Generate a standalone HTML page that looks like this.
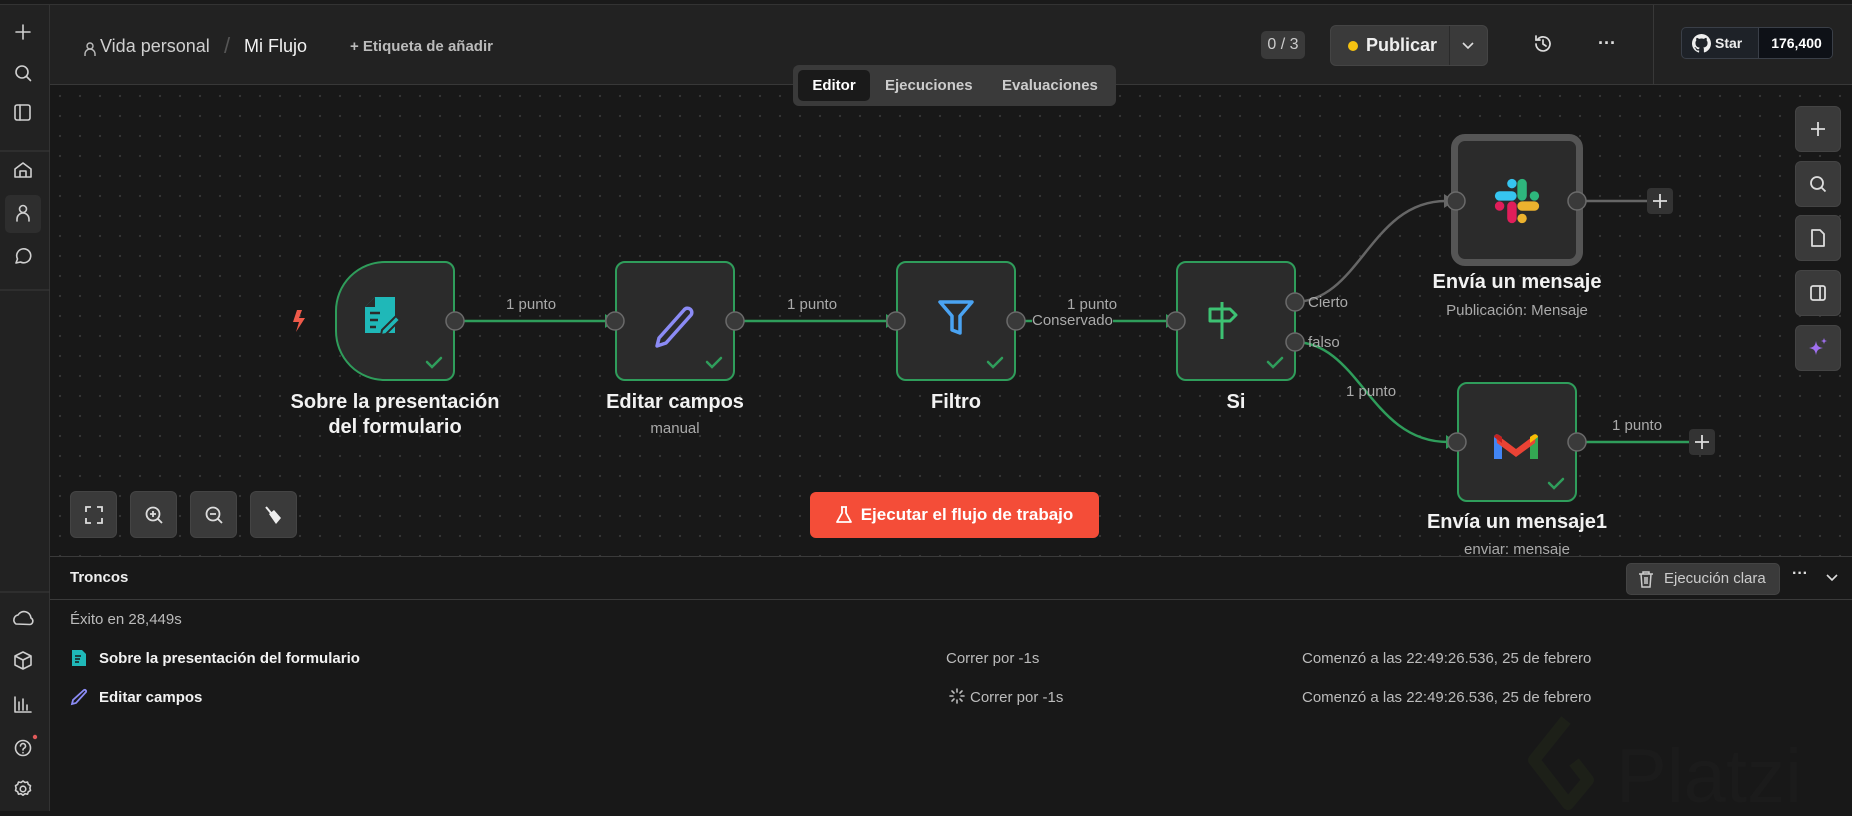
<!DOCTYPE html>
<html><head><meta charset="utf-8"><style>
*{box-sizing:border-box;margin:0;padding:0}
body{width:1852px;height:811px;overflow:hidden;background:#181818;font-family:"Liberation Sans",sans-serif;color:#ddd;position:relative}
.abs{position:absolute}
#top{left:0;top:0;width:1852px;height:5px;background:#1a1a1a;border-bottom:1px solid #333}
#side{left:0;top:5px;width:50px;height:806px;background:#222;border-right:1px solid #333}
#head{left:50px;top:5px;width:1802px;height:80px;background:#222;border-bottom:1px solid #383838}
#canvas{left:50px;top:86px;width:1802px;height:470px;background-color:#181818;background-image:radial-gradient(circle,#363636 1px,transparent 1.3px);background-size:20px 20px}
#panel{left:50px;top:556px;width:1802px;height:255px;background:#181818;border-top:1px solid #3a3a3a}
.btn{position:absolute;background:#3a3a3a;border:1px solid #444;border-radius:6px;display:flex;align-items:center;justify-content:center}
.node{position:absolute;background:#2b2b2b;border:2px solid #2f9d5b;border-radius:10px}
.lbl{position:absolute;text-align:center;color:#f2f2f2;font-weight:bold;font-size:20px;line-height:25px;transform:translateX(-50%);white-space:nowrap}
.sub{position:absolute;text-align:center;color:#aaa;font-size:15px;transform:translateX(-50%);white-space:nowrap}
.el{position:absolute;color:#aaa;font-size:15px;white-space:nowrap}
</style></head><body>
<div id="top" class="abs"></div>
<div id="side" class="abs">
<svg width="50" height="806" viewBox="0 5 50 806" fill="none" stroke="#cfcfcf" stroke-width="1.6" stroke-linecap="round" stroke-linejoin="round">
<path d="M23 25v14M16 32h14"/>
<circle cx="22" cy="72" r="6"/><path d="M26.5 76.5l4 4"/>
<rect x="15" y="105" width="15" height="15" rx="2"/><path d="M20 105v15"/>
<line x1="0" y1="151" x2="50" y2="151" stroke="#3a3a3a" stroke-width="1"/>
<path d="M15 177v-8l8-6 8 6v8zM20 177v-6h6v6"/>
<rect x="5" y="195" width="36" height="38" rx="5" fill="#2e2e2e" stroke="none"/>
<circle cx="23" cy="209" r="3.5"/><path d="M17 221v-2a6 6 0 0 1 12 0v2"/>
<path d="M16 263l1.5-4a7 7 0 1 1 3 3z"/>
<line x1="0" y1="290" x2="50" y2="290" stroke="#3a3a3a" stroke-width="1"/>
<line x1="0" y1="592" x2="50" y2="592" stroke="#3a3a3a" stroke-width="1"/>
<path d="M16 624a5 5 0 0 1 2-9 7 7 0 0 1 13 3 3.5 3.5 0 0 1-1 6.5z"/>
<path d="M23 652l8 4v9l-8 4-8-4v-9zM15 656l8 4 8-4M23 660v9"/>
<path d="M15 697v15h16M19 710v-8M23 710v-11M27 710v-5"/>
<circle cx="23" cy="748" r="7.5"/><path d="M20.5 746a2.5 2.5 0 1 1 3.5 2.3c-.8.4-1 1-1 1.7M23 752.5v.3"/>
<circle cx="35" cy="737" r="2.2" fill="#e05a5a" stroke="none"/>
<circle cx="23" cy="789" r="2.8"/><path d="M23 781l2 1.5 2.5-.5.8 2.4 2.2 1.3-.6 2.4.6 2.4-2.2 1.3-.8 2.4-2.5-.5-2 1.5-2-1.5-2.5.5-.8-2.4-2.2-1.3.6-2.4-.6-2.4 2.2-1.3.8-2.4 2.5.5z"/>
</svg></div>
<div id="head" class="abs">
<svg class="abs" style="left:33px;top:36px" width="14" height="16" fill="none" stroke="#bbb" stroke-width="1.4"><circle cx="7" cy="5" r="3"/><path d="M2 15v-2a5 5 0 0 1 10 0v2"/></svg>
<div class="abs" style="left:50px;top:31px;font-size:18px;color:#cfcfcf">Vida personal</div>
<div class="abs" style="left:174px;top:28px;font-size:22px;color:#555">/</div>
<div class="abs" style="left:194px;top:31px;font-size:18px;color:#f2f2f2">Mi Flujo</div>
<div class="abs" style="left:300px;top:33px;font-size:15px;color:#bbb;font-weight:bold">+ Etiqueta de añadir</div>
<div class="abs" style="left:1211px;top:26px;width:44px;height:28px;background:#3a3a3a;border-radius:5px;color:#ccc;font-size:16px;text-align:center;line-height:28px">0 / 3</div>
<div class="abs" style="left:1280px;top:20px;width:158px;height:41px;background:#3a3a3a;border:1px solid #444;border-radius:6px">
<div class="abs" style="left:17px;top:15px;width:10px;height:10px;border-radius:50%;background:#f5c211"></div>
<div class="abs" style="left:35px;top:9px;font-size:18px;font-weight:bold;color:#eee">Publicar</div>
<div class="abs" style="left:118px;top:0;width:1px;height:39px;background:#2a2a2a"></div>
<svg class="abs" style="left:131px;top:15px" width="12" height="10" fill="none" stroke="#ddd" stroke-width="1.6"><path d="M1 2l5 5 5-5"/></svg></div>
<svg class="abs" style="left:1483px;top:29px" width="20" height="20" fill="none" stroke="#ddd" stroke-width="1.7" stroke-linecap="round"><path d="M3 10a7 7 0 1 0 2-5M3 2v4h4M10 6v4l3 2"/></svg>
<div class="abs" style="left:1548px;top:28px;font-size:18px;color:#ddd;font-weight:bold">···</div>
<div class="abs" style="left:1603px;top:0;width:1px;height:80px;background:#383838"></div>
<div class="abs" style="left:1631px;top:22px;width:152px;height:32px;border:1px solid #3a3f48;border-radius:5px;background:#1e2228;overflow:hidden">
<svg class="abs" style="left:10px;top:6px" width="19" height="19" viewBox="0 0 16 16" fill="#eee"><path d="M8 0C3.6 0 0 3.6 0 8c0 3.5 2.3 6.5 5.5 7.6.4.1.5-.2.5-.4v-1.4c-2.2.5-2.7-1-2.7-1-.4-.9-.9-1.2-.9-1.2-.7-.5.1-.5.1-.5.8.1 1.2.8 1.2.8.7 1.3 1.9.9 2.3.7.1-.5.3-.9.5-1.1-1.8-.2-3.6-.9-3.6-4 0-.9.3-1.6.8-2.1-.1-.2-.4-1 .1-2.1 0 0 .7-.2 2.2.8.6-.2 1.3-.3 2-.3s1.4.1 2 .3c1.5-1 2.2-.8 2.2-.8.4 1.1.2 1.9.1 2.1.5.6.8 1.3.8 2.1 0 3.1-1.9 3.7-3.6 3.9.3.3.5.8.5 1.5v2.2c0 .2.1.5.6.4C13.7 14.5 16 11.5 16 8c0-4.4-3.6-8-8-8z"/></svg>
<div class="abs" style="left:33px;top:7px;font-size:14px;font-weight:bold;color:#eee">Star</div>
<div class="abs" style="left:76px;top:0;width:76px;height:32px;background:#0e1117;border-left:1px solid #3a3f48;color:#fff;font-weight:bold;font-size:14px;text-align:center;line-height:30px">176,400</div></div>
</div>
<div id="canvas" class="abs"></div>
<div class="abs" style="left:793px;top:65px;width:323px;height:41px;background:#3a3a3a;border-radius:6px">
<div class="abs" style="left:5px;top:5px;width:72px;height:31px;background:#1a1a1a;border-radius:5px;color:#fff;font-weight:bold;font-size:15px;text-align:center;line-height:31px">Editor</div>
<div class="abs" style="left:92px;top:12px;font-size:15px;font-weight:bold;color:#ccc">Ejecuciones</div>
<div class="abs" style="left:209px;top:12px;font-size:15px;font-weight:bold;color:#ccc">Evaluaciones</div></div>
<svg class="abs" style="left:0;top:0" width="1852" height="811" fill="none">
<g stroke="#2f9d5b" stroke-width="2.5">
<path d="M455 321H606"/><path d="M735 321H887"/><path d="M1015 321H1167"/>
<path d="M1294 342C1360 342 1370 442 1448 442"/>
<path d="M1576 442H1689"/></g>
<g fill="#2f9d5b"><path d="M605 314l11 7-11 7z"/><path d="M886 314l11 7-11 7z"/><path d="M1166 314l11 7-11 7z"/><path d="M1446 435l11 7-11 7z"/></g>
<path d="M1294 302C1360 302 1370 201 1446 201" stroke="#666" stroke-width="2.5"/><path d="M1444 194l11 7-11 7z" fill="#666"/>
<path d="M1577 201H1648" stroke="#666" stroke-width="2.5"/>
<path d="M297 310l-4 12h6l-3 10 9-14h-6l3-8z" fill="#ef5a4a"/>
</svg>
<div class="node" style="left:335px;top:261px;width:120px;height:120px;border-radius:50px 10px 10px 50px"></div>
<div class="node" style="left:615px;top:261px;width:120px;height:120px"></div>
<div class="node" style="left:896px;top:261px;width:120px;height:120px"></div>
<div class="node" style="left:1176px;top:261px;width:120px;height:120px"></div>
<div class="node" style="left:1451px;top:134px;width:132px;height:132px;border:7px solid #555;border-radius:14px;background:#2b2b2b"></div>
<div class="node" style="left:1457px;top:382px;width:120px;height:120px"></div>
<svg class="abs" style="left:0;top:0" width="1852" height="811" fill="none">
<path d="M375 297h20v36h-30v-26z" fill="#1fb8b8"/><path d="M375 297v10h-10z" fill="#2b2b2b"/>
<path d="M370 313h10M370 320h8M370 327h6" stroke="#2b2b2b" stroke-width="2.5"/>
<path d="M382 330l14-14 4 4-14 14-5 1z" fill="#1fb8b8" stroke="#2b2b2b" stroke-width="2"/>
<path d="M659 338l25-28a4 4 0 0 1 7 5l-25 28-9 3z" stroke="#8b8bf5" stroke-width="3.5" stroke-linejoin="round"/>
<path d="M940 302h32l-12 14v17l-8-3v-14z" stroke="#4aa3f2" stroke-width="3.5" stroke-linejoin="round"/>
<path d="M1222 302v37M1210 309h20l6 6-6 6h-20z" stroke="#3dc273" stroke-width="3" stroke-linejoin="round"/>
<g transform="translate(1517 201) scale(1.45)" stroke-width="6.5" stroke-linecap="round">
<path d="M-12 -3.5H-3.5" stroke="#36c5f0"/><circle cx="-3.5" cy="-12" r="3.25" fill="#36c5f0" stroke="none"/>
<path d="M3.5 -12V-3.5" stroke="#2eb67d"/><circle cx="12" cy="-3.5" r="3.25" fill="#2eb67d" stroke="none"/>
<path d="M3.5 3.5H12" stroke="#ecb22e"/><circle cx="3.5" cy="12" r="3.25" fill="#ecb22e" stroke="none"/>
<path d="M-3.5 3.5V12" stroke="#e01e5a"/><circle cx="-12" cy="3.5" r="3.25" fill="#e01e5a" stroke="none"/></g>
<path d="M1494 459v-22a3 3 0 0 1 5-2l3 2v22z" fill="#4285f4"/>
<path d="M1530 459v-22l3-2a3 3 0 0 1 5 2v22z" fill="#34a853"/>
<path d="M1496 434l20 15 20-15-1 9-19 14-19-14z" fill="#ea4335"/>
<path d="M1494 437l8 6v-6l-3-2a3 3 0 0 0-5 2z" fill="#c5221f"/>
<path d="M1530 437v6l8-6a3 3 0 0 0-5-2z" fill="#fbbc04"/>
<g stroke="#2f9d5b" stroke-width="2.5" stroke-linecap="round"><path d="M427 362l5 5 9-9"/><path d="M707 362l5 5 9-9"/><path d="M988 362l5 5 9-9"/><path d="M1268 362l5 5 9-9"/><path d="M1549 483l5 5 9-9"/></g>
<g fill="#3a3a3a" stroke="#6a6a6a" stroke-width="1.5">
<circle cx="455" cy="321" r="9"/><circle cx="615" cy="321" r="9"/><circle cx="735" cy="321" r="9"/><circle cx="896" cy="321" r="9"/><circle cx="1016" cy="321" r="9"/><circle cx="1176" cy="321" r="9"/>
<circle cx="1295" cy="302" r="9"/><circle cx="1295" cy="342" r="9"/><circle cx="1456" cy="201" r="9"/><circle cx="1577" cy="201" r="9"/><circle cx="1457" cy="442" r="9"/><circle cx="1577" cy="442" r="9"/></g>
<rect x="1647" y="188" width="26" height="26" rx="4" fill="#333"/><path d="M1660 194v14M1653 201h14" stroke="#ddd" stroke-width="1.8"/>
<rect x="1689" y="429" width="26" height="26" rx="4" fill="#333"/><path d="M1702 435v14M1695 442h14" stroke="#ddd" stroke-width="1.8"/>
</svg>
<div class="lbl" style="left:395px;top:390px">Sobre la presentación<br>del formulario</div>
<div class="lbl" style="left:675px;top:390px">Editar campos</div><div class="sub" style="left:675px;top:420px">manual</div>
<div class="lbl" style="left:956px;top:390px">Filtro</div>
<div class="lbl" style="left:1236px;top:390px">Si</div>
<div class="lbl" style="left:1517px;top:270px">Envía un mensaje</div><div class="sub" style="left:1517px;top:302px">Publicación: Mensaje</div>
<div class="lbl" style="left:1517px;top:510px">Envía un mensaje1</div><div class="sub" style="left:1517px;top:541px">enviar: mensaje</div>
<div class="el" style="left:506px;top:296px">1 punto</div>
<div class="el" style="left:787px;top:296px">1 punto</div>
<div class="el" style="left:1067px;top:296px">1 punto</div>
<div class="el" style="left:1032px;top:313px;background:#181818;line-height:16px">Conservado</div>
<div class="el" style="left:1308px;top:294px">Cierto</div>
<div class="el" style="left:1308px;top:334px">falso</div>
<div class="el" style="left:1346px;top:383px">1 punto</div>
<div class="el" style="left:1612px;top:417px">1 punto</div>
<div class="btn" style="left:1795px;top:106px;width:46px;height:46px"><svg width="18" height="18" stroke="#ddd" stroke-width="1.8"><path d="M9 2v14M2 9h14"/></svg></div>
<div class="btn" style="left:1795px;top:161px;width:46px;height:46px"><svg width="20" height="20" fill="none" stroke="#ddd" stroke-width="1.8"><circle cx="9" cy="9" r="6"/><path d="M13.5 13.5l4 4"/></svg></div>
<div class="btn" style="left:1795px;top:215px;width:46px;height:46px"><svg width="18" height="20" fill="none" stroke="#ddd" stroke-width="1.8" stroke-linejoin="round"><path d="M3 2h8l4 4v12H3z"/></svg></div>
<div class="btn" style="left:1795px;top:270px;width:46px;height:46px"><svg width="20" height="20" fill="none" stroke="#ddd" stroke-width="1.8"><rect x="3" y="3" width="14" height="14" rx="2"/><path d="M12 3v14"/></svg></div>
<div class="btn" style="left:1795px;top:325px;width:46px;height:46px"><svg width="22" height="22" fill="#a070f0"><path d="M9 4c1 5 2 6 7 7-5 1-6 2-7 7-1-5-2-6-7-7 5-1 6-2 7-7z"/><path d="M17 1l.8 2.2L20 4l-2.2.8L17 7l-.8-2.2L14 4l2.2-.8z"/></svg></div>
<div class="btn" style="left:70px;top:491px;width:47px;height:47px"><svg width="18" height="18" fill="none" stroke="#ddd" stroke-width="1.8"><path d="M1 6V1h5M12 1h5v5M17 12v5h-5M6 17H1v-5"/></svg></div>
<div class="btn" style="left:130px;top:491px;width:47px;height:47px"><svg width="20" height="20" fill="none" stroke="#ddd" stroke-width="1.8"><circle cx="9" cy="9" r="6.5"/><path d="M14 14l4 4M9 6v6M6 9h6"/></svg></div>
<div class="btn" style="left:190px;top:491px;width:47px;height:47px"><svg width="20" height="20" fill="none" stroke="#ddd" stroke-width="1.8"><circle cx="9" cy="9" r="6.5"/><path d="M14 14l4 4M6 9h6"/></svg></div>
<div class="btn" style="left:250px;top:491px;width:47px;height:47px"><svg width="20" height="20" fill="#eee"><path d="M2 2l5 6" stroke="#eee" stroke-width="2"/><path d="M5 9l5-4 7 8-5 6z"/></svg></div>
<div class="abs" style="left:810px;top:492px;width:289px;height:46px;background:#f44d38;border-radius:6px;color:#fff;font-size:17px;font-weight:bold;display:flex;align-items:center;justify-content:center;gap:9px">
<svg width="16" height="18" fill="none" stroke="#fff" stroke-width="1.8" stroke-linejoin="round"><path d="M5 1h6M6 1v6L1 16h14L10 7V1"/></svg>Ejecutar el flujo de trabajo</div>
<div id="panel" class="abs">
<div class="abs" style="left:20px;top:12px;font-size:15px;font-weight:bold;color:#eee">Troncos</div>
<div class="abs" style="left:1576px;top:6px;width:154px;height:32px;background:#3a3a3a;border:1px solid #444;border-radius:5px;color:#ccc;font-size:15px;line-height:30px;padding-left:37px">Ejecución clara</div>
<svg class="abs" style="left:1588px;top:13px" width="16" height="18" fill="none" stroke="#ccc" stroke-width="1.5"><path d="M1 4h14M5 4V2h6v2M3 4l1 13h8l1-13M7 7v7M9 7v7"/></svg>
<div class="abs" style="left:1742px;top:8px;font-size:16px;font-weight:bold;color:#ddd">···</div>
<svg class="abs" style="left:1776px;top:16px" width="12" height="10" fill="none" stroke="#ddd" stroke-width="1.6"><path d="M1 2l5 5 5-5"/></svg>
<div class="abs" style="left:0;top:42px;width:1802px;height:1px;background:#3a3a3a"></div>
<div class="abs" style="left:20px;top:54px;font-size:15px;color:#bbb">Éxito en 28,449s</div>
<svg class="abs" style="left:20px;top:92px" width="18" height="18"><path d="M2 1h10l4 4v12H2z" fill="#1fb8b8"/><path d="M5 7h6M5 10h5M5 13h4" stroke="#181818" stroke-width="1.5"/></svg>
<div class="abs" style="left:49px;top:93px;font-size:15px;font-weight:bold;color:#f2f2f2">Sobre la presentación del formulario</div>
<svg class="abs" style="left:20px;top:131px" width="18" height="18" fill="none" stroke="#8b8bf5" stroke-width="1.8"><path d="M2 16l1-4L14 2a1.5 1.5 0 0 1 2 2L6 15z"/></svg>
<div class="abs" style="left:49px;top:132px;font-size:15px;font-weight:bold;color:#f2f2f2">Editar campos</div>
<div class="abs" style="left:896px;top:93px;font-size:15px;color:#bbb">Correr por -1s</div>
<svg class="abs" style="left:899px;top:131px" width="16" height="16" stroke="#bbb" stroke-width="1.6" stroke-linecap="round"><path d="M8 1v3M8 12v3M1 8h3M12 8h3M3 3l2 2M11 11l2 2M3 13l2-2M11 5l2-2"/></svg>
<div class="abs" style="left:920px;top:132px;font-size:15px;color:#bbb">Correr por -1s</div>
<div class="abs" style="left:1252px;top:93px;font-size:15px;color:#bbb">Comenzó a las 22:49:26.536, 25 de febrero</div>
<div class="abs" style="left:1252px;top:132px;font-size:15px;color:#bbb">Comenzó a las 22:49:26.536, 25 de febrero</div>
<svg class="abs" style="left:1476px;top:155px" width="300" height="100" fill="none"><path d="M40 8L8 48l34 44 20-24-14-18" stroke="#1d2018" stroke-width="12" stroke-linejoin="round"/><text x="90" y="90" font-family="Liberation Sans" font-size="76" fill="#1b1b1b">Platzi</text></svg>
</div>
</body></html>
